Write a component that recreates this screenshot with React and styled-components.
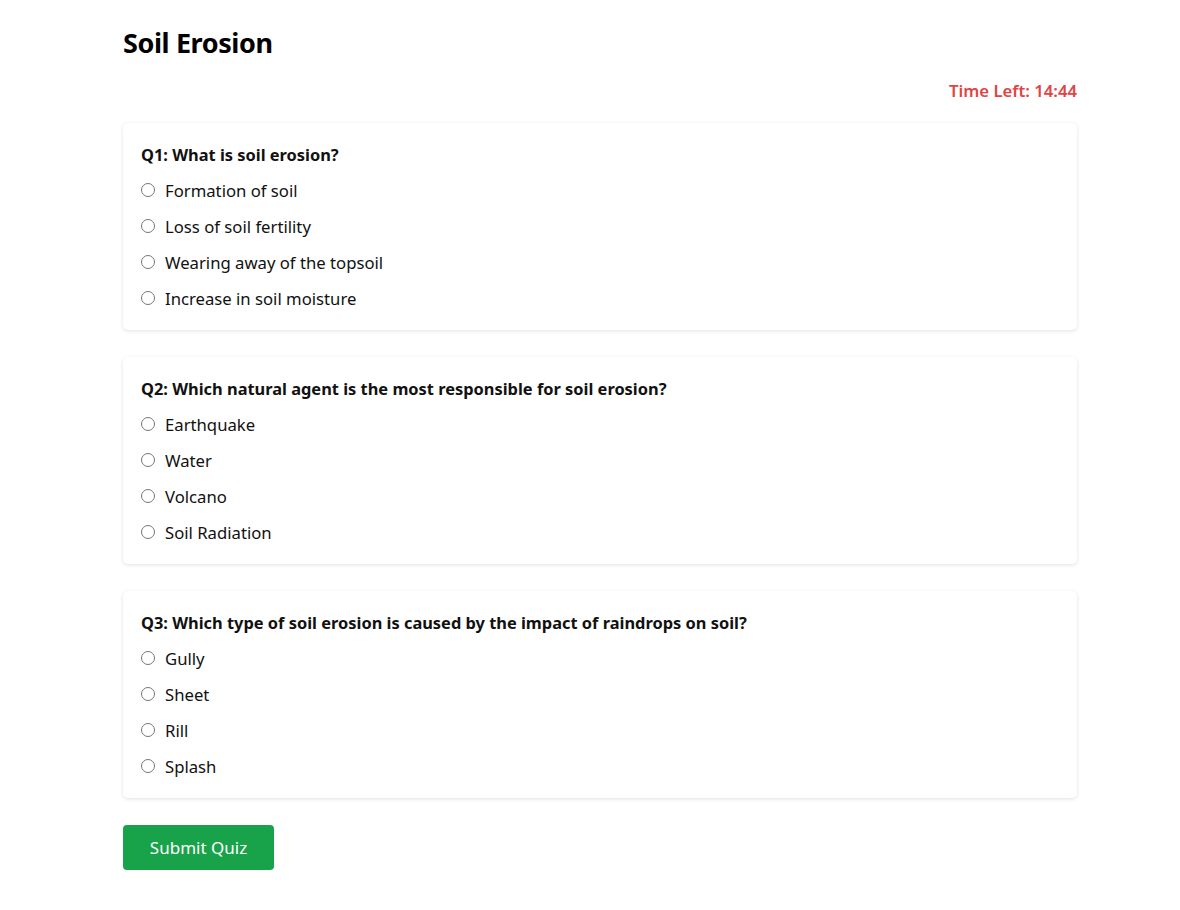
import React from "react";
import styled, { createGlobalStyle } from "styled-components";

const GlobalStyle = createGlobalStyle`
  body {
    margin: 0;
    background: #ffffff;
    font-family: "Noto Sans", "Open Sans", sans-serif;
    color: #111;
  }
`;

const Page = styled.div`
  width: 954px;
  margin: 0 0 0 123px;
  padding: 26px 0 40px;
  display: flex;
  flex-direction: column;
`;

const Title = styled.h1`
  margin: 0;
  font-size: 27px;
  letter-spacing: -0.4px;
  line-height: 34px;
  font-weight: 700;
  color: #000;
`;

const Timer = styled.div`
  margin-top: 19px;
  align-self: flex-end;
  font-size: 16.7px;
  line-height: 24px;
  font-weight: 600;
  color: #e04444;
`;

const Questions = styled.div`
  margin-top: 20px;
  display: flex;
  flex-direction: column;
  gap: 27px;
`;

const Card = styled.div`
  background: #fff;
  border-radius: 5px;
  padding: 20px 18px;
  box-shadow: 0 1px 4px rgba(0, 0, 0, 0.12);
`;

const Question = styled.div`
  font-size: 16.4px;
  line-height: 24px;
  font-weight: 700;
  margin-bottom: 11px;
`;

const Options = styled.div`
  display: flex;
  flex-direction: column;
  gap: 12px;
`;

const Option = styled.label`
  display: flex;
  align-items: center;
  height: 24px;
  font-size: 16.7px;
  cursor: pointer;
`;

const Radio = styled.input`
  width: 14px;
  height: 14px;
  margin: 0 10px 0 0;
`;

const SubmitButton = styled.button`
  margin-top: 27px;
  align-self: flex-start;
  background: #18a34a;
  color: #fff;
  border: none;
  border-radius: 4px;
  height: 45px;
  width: 151px;
  padding: 0;
  font-family: inherit;
  font-size: 17px;
  cursor: pointer;
`;

const quiz = [
  {
    q: "Q1: What is soil erosion?",
    options: [
      "Formation of soil",
      "Loss of soil fertility",
      "Wearing away of the topsoil",
      "Increase in soil moisture",
    ],
  },
  {
    q: "Q2: Which natural agent is the most responsible for soil erosion?",
    options: ["Earthquake", "Water", "Volcano", "Soil Radiation"],
  },
  {
    q: "Q3: Which type of soil erosion is caused by the impact of raindrops on soil?",
    options: ["Gully", "Sheet", "Rill", "Splash"],
  },
];

export default function App() {
  return (
    <>
      <GlobalStyle />
      <Page>
        <Title>Soil Erosion</Title>
        <Timer>Time Left: 14:44</Timer>
        <Questions>
          {quiz.map((item, i) => (
            <Card key={i}>
              <Question>{item.q}</Question>
              <Options>
                {item.options.map((opt) => (
                  <Option key={opt}>
                    <Radio type="radio" name={`q${i}`} value={opt} />
                    {opt}
                  </Option>
                ))}
              </Options>
            </Card>
          ))}
        </Questions>
        <SubmitButton>Submit Quiz</SubmitButton>
      </Page>
    </>
  );
}
